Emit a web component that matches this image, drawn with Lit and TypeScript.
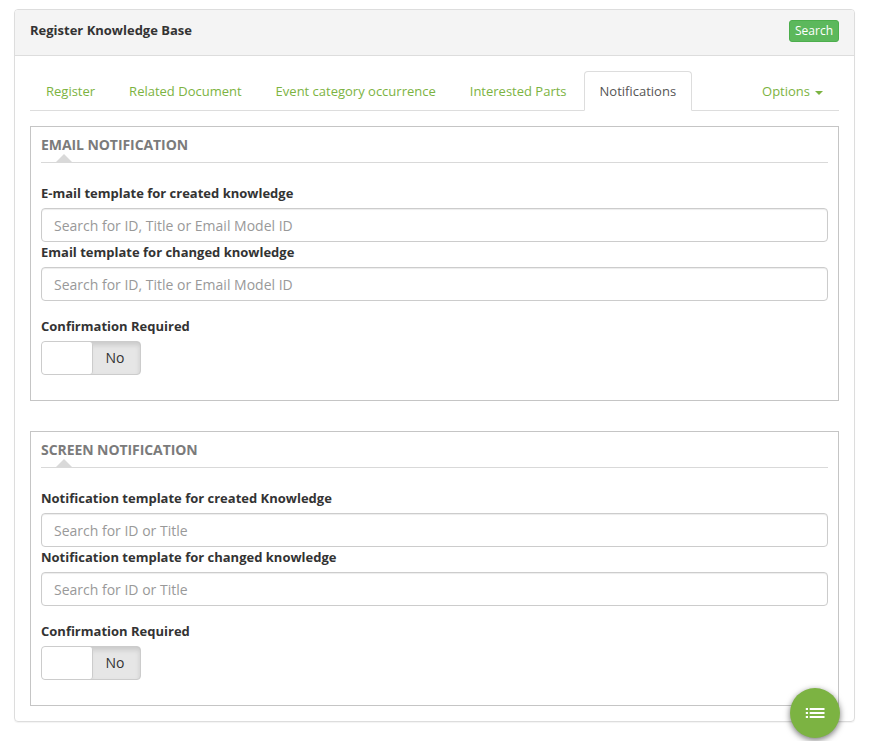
import { LitElement, html, css } from "lit";
import { customElement, property } from "lit/decorators.js";

@customElement("toggle-switch")
class ToggleSwitch extends LitElement {
  static styles = css`
    :host { display: block; }
    .switch {
      box-sizing: border-box; display: flex; width: 100px; height: 34px;
      border: 1px solid #ccc; border-radius: 4px; overflow: hidden;
      background: #e6e6e6; font-size: 14px; color: #333; cursor: pointer;
    }
    .knob {
      box-sizing: border-box; width: 51px; height: 32px; background: #fff;
      border-right: 1px solid #ccc; border-radius: 3px; z-index: 1;
    }
    .off {
      flex: 1; margin-left: -3px; line-height: 32px; text-align: center;
      box-shadow: inset 0 3px 5px rgba(0, 0, 0, 0.125);
    }
  `;
  render() {
    return html`<div class="switch"><span class="knob"></span><span class="off">No</span></div>`;
  }
}

@customElement("notification-section")
class NotificationSection extends LitElement {
  @property() heading = "";
  @property() hint = "";
  @property({ attribute: false }) fields: string[] = [];

  static styles = css`
    :host { display: block; }
    .box { box-sizing: border-box; height: 275px; border: 1px solid #c5c5c5; padding: 0 10px; }
    .heading {
      box-sizing: border-box; position: relative; height: 36px; margin: 0 0 20px;
      border-bottom: 1px solid #d9d9d9; font-size: 14px; font-weight: 700;
      line-height: 36px; letter-spacing: -0.07px; color: #7b7b7b;
    }
    .heading::after {
      content: ""; position: absolute; left: 15px; bottom: 0;
      border: 8px solid transparent; border-top: 0; border-bottom-color: #d9d9d9;
    }
    .label { display: block; height: 25px; line-height: 20px; font-weight: 700; color: #333; }
    .input {
      box-sizing: border-box; display: block; width: 100%; height: 34px; padding: 6px 12px;
      border: 1px solid #ccc; border-radius: 4px; background: #fff; color: #555;
      font: 14px "Open Sans", sans-serif; box-shadow: inset 0 1px 1px rgba(0, 0, 0, 0.075);
    }
    .input::placeholder { color: #999; opacity: 1; }
    .confirm { margin-top: 15px; }
  `;
  render() {
    return html`<section class="box">
      <h2 class="heading">${this.heading}</h2>
      ${this.fields.map(
        (f) => html`<label class="label">${f}</label><input class="input" placeholder=${this.hint} />`
      )}
      <div class="confirm"><label class="label">Confirmation Required</label><toggle-switch></toggle-switch></div>
    </section>`;
  }
}

@customElement("app-root")
class AppRoot extends LitElement {
  static styles = css`
    :host {
      display: block; box-sizing: border-box; height: 741px; padding: 9px 17px 19px 14px;
      background: #fff; font-family: "Open Sans", sans-serif; font-size: 13px; color: #333;
    }
    .panel {
      box-sizing: border-box; height: 713px; border: 1px solid #ddd; border-radius: 4px;
      box-shadow: 0 1px 1px rgba(0, 0, 0, 0.05);
    }
    .header {
      box-sizing: border-box; display: flex; justify-content: space-between; align-items: flex-start;
      height: 46px; padding: 10px 15px 0; background: #f4f4f4;
      border-bottom: 1px solid #ddd; border-radius: 3px 3px 0 0;
    }
    .title { margin: 0; font-size: 13px; font-weight: 700; line-height: 20px; }
    .search {
      box-sizing: border-box; height: 22px; padding: 0 5px; border: 1px solid #4cae4c;
      border-radius: 3px; background: #5cb85c; color: #fff; font: 12px/20px "Open Sans", sans-serif;
    }
    .body { padding: 15px; }
    .tabs { box-sizing: border-box; display: flex; height: 40px; border-bottom: 1px solid #ddd; margin-bottom: 15px; }
    .tab {
      box-sizing: border-box; height: 40px; margin-right: 2px; padding: 0 15px;
      border: 1px solid transparent; border-radius: 4px 4px 0 0; line-height: 39px;
      color: #7cb342; white-space: nowrap;
    }
    .tab.active { margin-left: -1px; border-color: #ddd; border-bottom-color: #fff; background: #fff; color: #555; }
    .tab.options { margin: 0 0 0 auto; }
    .caret {
      display: inline-block; margin-left: 5px; vertical-align: middle;
      border: 4px solid transparent; border-top-color: currentColor; border-bottom: 0;
    }
    .sections { display: grid; gap: 30px; }
    .fab {
      position: absolute; left: 790px; top: 688px; width: 50px; height: 50px; padding: 0;
      display: flex; align-items: center; justify-content: center; border: 0; border-radius: 50%;
      background: #7cb342; box-shadow: 0 2px 6px rgba(0, 0, 0, 0.55);
    }
  `;
  render() {
    const tabs = ["Register", "Related Document", "Event category occurrence", "Interested Parts", "Notifications"];
    return html`<main class="panel">
        <header class="header"><h1 class="title">Register Knowledge Base</h1><button class="search">Search</button></header>
        <div class="body">
          <nav class="tabs">
            ${tabs.map((t) => html`<a class="tab ${t === "Notifications" ? "active" : ""}">${t}</a>`)}
            <a class="tab options">Options<span class="caret"></span></a>
          </nav>
          <div class="sections">
            <notification-section
              heading="EMAIL NOTIFICATION"
              hint="Search for ID, Title or Email Model ID"
              .fields=${["E-mail template for created knowledge", "Email template for changed knowledge"]}
            ></notification-section>
            <notification-section
              heading="SCREEN NOTIFICATION"
              hint="Search for ID or Title"
              .fields=${["Notification template for created Knowledge", "Notification template for changed knowledge"]}
            ></notification-section>
          </div>
        </div>
      </main>
      <button class="fab" aria-label="Menu">
        <svg width="20" height="10" viewBox="0 0 20 10" fill="#fff">
          <path d="M.8 0H3v2H.8zM4.7 0h14.8v2H4.7zM.8 4H3v2H.8zM4.7 4h14.8v2H4.7zM.8 8H3v2H.8zM4.7 8h14.8v2H4.7z" />
        </svg>
      </button>`;
  }
}
